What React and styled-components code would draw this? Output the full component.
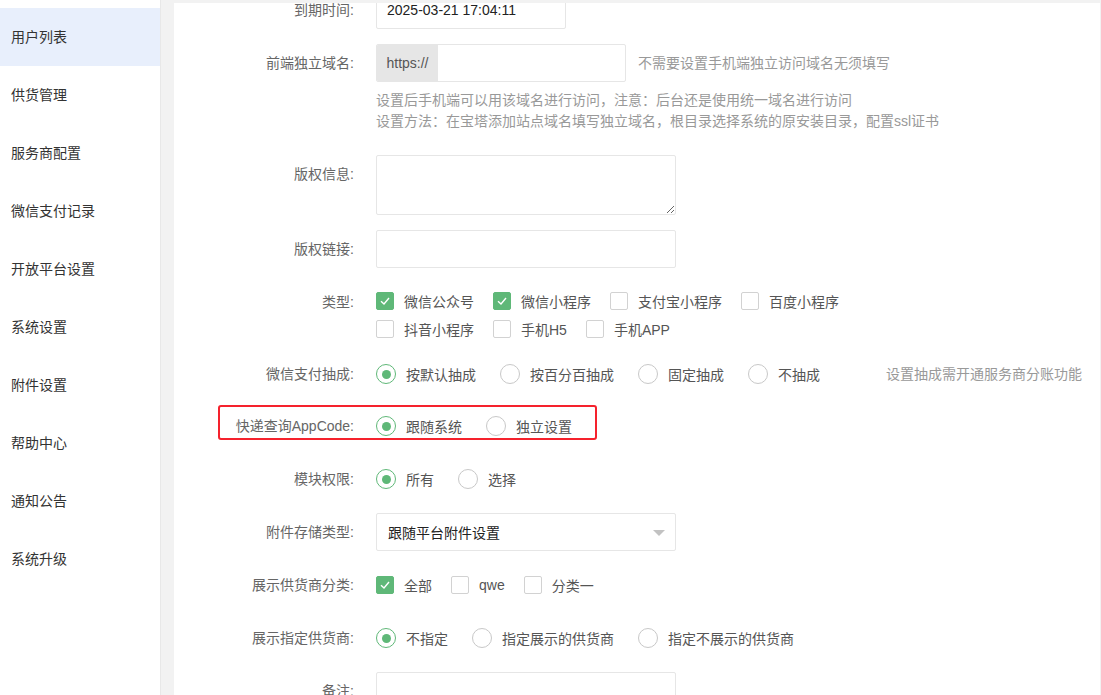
import React from "react";
import styled, { createGlobalStyle } from "styled-components";

const GlobalStyle = createGlobalStyle`
  html, body {
    margin: 0;
    padding: 0;
    background: #f2f2f2;
    font-family: "Liberation Sans", "Noto Sans CJK SC", sans-serif;
    font-size: 14px;
    overflow: hidden;
  }
  #root {
    height: 695px;
  }
`;

const menu = [
  "用户列表",
  "供货管理",
  "服务商配置",
  "微信支付记录",
  "开放平台设置",
  "系统设置",
  "附件设置",
  "帮助中心",
  "通知公告",
  "系统升级",
];

function Check({ checked, label }) {
  return (
    <CheckItem>
      <CheckBox $checked={checked}>
        {checked && (
          <svg width="12" height="12" viewBox="0 0 12 12">
            <polyline points="2,6.2 5,9 10,3" fill="none" stroke="#fff" strokeWidth="1.4" />
          </svg>
        )}
      </CheckBox>
      <OptionText>{label}</OptionText>
    </CheckItem>
  );
}

function Radio({ checked, label }) {
  return (
    <RadioItem>
      <RadioRing $checked={checked}>{checked && <RadioDot />}</RadioRing>
      <OptionText>{label}</OptionText>
    </RadioItem>
  );
}

export default function App() {
  return (
    <>
      <GlobalStyle />
      <Shell>
        <Sidebar>
          {menu.map((m, i) => (
            <MenuItem key={m} $active={i === 0}>
              {m}
            </MenuItem>
          ))}
        </Sidebar>
        <Main>
          <Panel>
            <Form>
              <FormItem>
                <Label>到期时间:</Label>
                <DateInput>2025-03-21 17:04:11</DateInput>
              </FormItem>

              <FormItem>
                <Label>前端独立域名:</Label>
                <Block>
                  <InlineRow>
                    <InputGroup>
                      <Prefix>https://</Prefix>
                      <GroupInput />
                    </InputGroup>
                    <Aux $left={12}>不需要设置手机端独立访问域名无须填写</Aux>
                  </InlineRow>
                  <Helper>
                    <div>设置后手机端可以用该域名进行访问，注意：后台还是使用统一域名进行访问</div>
                    <div>设置方法：在宝塔添加站点域名填写独立域名，根目录选择系统的原安装目录，配置ssl证书</div>
                  </Helper>
                </Block>
              </FormItem>

              <FormItem>
                <Label>版权信息:</Label>
                <TextArea />
              </FormItem>

              <FormItem>
                <Label>版权链接:</Label>
                <TextInput />
              </FormItem>

              <FormItem $gap={12}>
                <Label>类型:</Label>
                <CheckGroup>
                  <Check checked label="微信公众号" />
                  <Check checked label="微信小程序" />
                  <Check label="支付宝小程序" />
                  <Check label="百度小程序" />
                  <Check label="抖音小程序" />
                  <Check label="手机H5" />
                  <Check label="手机APP" />
                </CheckGroup>
              </FormItem>

              <FormItem $gap={14}>
                <Label>微信支付抽成:</Label>
                <RadioGroup>
                  <Radio checked label="按默认抽成" />
                  <Radio label="按百分百抽成" />
                  <Radio label="固定抽成" />
                  <Radio label="不抽成" />
                  <Aux $left={42}>设置抽成需开通服务商分账功能</Aux>
                </RadioGroup>
              </FormItem>

              <FormItem>
                <Highlight />
                <Label>快递查询AppCode:</Label>
                <RadioGroup>
                  <Radio checked label="跟随系统" />
                  <Radio label="独立设置" />
                </RadioGroup>
              </FormItem>

              <FormItem>
                <Label>模块权限:</Label>
                <RadioGroup>
                  <Radio checked label="所有" />
                  <Radio label="选择" />
                </RadioGroup>
              </FormItem>

              <FormItem>
                <Label>附件存储类型:</Label>
                <Select>
                  <span>跟随平台附件设置</span>
                  <Caret />
                </Select>
              </FormItem>

              <FormItem>
                <Label>展示供货商分类:</Label>
                <CheckGroup $top={5}>
                  <Check checked label="全部" />
                  <Check label="qwe" />
                  <Check label="分类一" />
                </CheckGroup>
              </FormItem>

              <FormItem>
                <Label>展示指定供货商:</Label>
                <RadioGroup>
                  <Radio checked label="不指定" />
                  <Radio label="指定展示的供货商" />
                  <Radio label="指定不展示的供货商" />
                </RadioGroup>
              </FormItem>

              <FormItem>
                <Label>备注:</Label>
                <TextInput />
              </FormItem>
            </Form>
          </Panel>
        </Main>
      </Shell>
    </>
  );
}

const Shell = styled.div`
  display: flex;
  height: 695px;
`;

const Sidebar = styled.nav`
  width: 161px;
  flex-shrink: 0;
  background: #fff;
  border-right: 1px solid #e8e8e8;
  box-sizing: border-box;
  padding-top: 8px;
`;

const MenuItem = styled.div`
  height: 58px;
  line-height: 58px;
  padding-left: 11px;
  color: #333;
  font-size: 14px;
  background: ${(p) => (p.$active ? "#e8effc" : "transparent")};
`;

const Main = styled.main`
  flex: 1;
  padding: 3px 1px 0 13px;
  box-sizing: border-box;
  min-width: 0;
`;

const Panel = styled.section`
  background: #fff;
  height: 100%;
  overflow: hidden;
`;

const Form = styled.div`
  margin-top: -12px;
`;

const FormItem = styled.div`
  position: relative;
  display: flex;
  align-items: flex-start;
  margin-bottom: ${(p) => (p.$gap !== undefined ? p.$gap : 15)}px;
`;

const Label = styled.label`
  width: 180px;
  flex-shrink: 0;
  margin-right: 22px;
  text-align: right;
  line-height: 38px;
  color: #666;
  white-space: nowrap;
`;

const Block = styled.div`
  display: flex;
  flex-direction: column;
`;

const InlineRow = styled.div`
  display: flex;
  align-items: center;
`;

const inputBase = `
  box-sizing: border-box;
  height: 38px;
  border: 1px solid #e6e6e6;
  border-radius: 2px;
  background: #fff;
`;

const DateInput = styled.div`
  ${inputBase}
  width: 190px;
  line-height: 36px;
  padding-left: 10px;
  color: #222;
`;

const TextInput = styled.div`
  ${inputBase}
  width: 300px;
`;

const InputGroup = styled.div`
  ${inputBase}
  width: 250px;
  display: flex;
  overflow: hidden;
`;

const Prefix = styled.span`
  width: 61px;
  background: #e6e6e6;
  color: #555;
  line-height: 36px;
  text-align: center;
`;

const GroupInput = styled.div`
  flex: 1;
`;

const Aux = styled.span`
  margin-left: ${(p) => p.$left}px;
  color: #999;
  line-height: 38px;
  white-space: nowrap;
`;

const Helper = styled.div`
  margin: 8px 0 8px;
  color: #999;
  line-height: 21px;
  white-space: nowrap;
`;

const TextArea = styled.textarea`
  box-sizing: border-box;
  width: 300px;
  height: 60px;
  border: 1px solid #e6e6e6;
  border-radius: 2px;
  margin: 0;
  outline: none;
`;

const CheckGroup = styled.div`
  display: flex;
  flex-wrap: wrap;
  width: 500px;
  padding-top: ${(p) => (p.$top !== undefined ? p.$top : 4)}px;
`;

const CheckItem = styled.div`
  display: flex;
  align-items: center;
  height: 28px;
  margin-right: 19px;
`;

const CheckBox = styled.span`
  box-sizing: border-box;
  width: 18px;
  height: 18px;
  border-radius: 2px;
  border: 1px solid ${(p) => (p.$checked ? "#5fb878" : "#d2d2d2")};
  background: ${(p) => (p.$checked ? "#5fb878" : "#fff")};
  display: flex;
  align-items: center;
  justify-content: center;
  margin-right: 10px;
`;

const OptionText = styled.span`
  color: #555;
  white-space: nowrap;
`;

const RadioGroup = styled.div`
  display: flex;
  align-items: center;
  height: 38px;
`;

const RadioItem = styled.div`
  display: flex;
  align-items: center;
  margin-right: 24px;
`;

const RadioRing = styled.span`
  box-sizing: border-box;
  width: 20px;
  height: 20px;
  border-radius: 50%;
  border: 1.5px solid ${(p) => (p.$checked ? "#5fb878" : "#c8c8c8")};
  display: flex;
  align-items: center;
  justify-content: center;
  margin-right: 10px;
`;

const RadioDot = styled.span`
  width: 9px;
  height: 9px;
  border-radius: 50%;
  background: #5fb878;
`;

const Select = styled.div`
  ${inputBase}
  width: 300px;
  display: flex;
  align-items: center;
  justify-content: space-between;
  padding: 0 10px 0 11px;
  color: #222;
`;

const Caret = styled.span`
  width: 0;
  height: 0;
  border-left: 6px solid transparent;
  border-right: 6px solid transparent;
  border-top: 6px solid #c2c2c2;
  margin-top: 2px;
`;

const Highlight = styled.div`
  position: absolute;
  left: 44px;
  top: -2px;
  width: 379px;
  height: 35px;
  box-sizing: border-box;
  border: 2px solid #f5222d;
  border-radius: 3px;
  pointer-events: none;
`;
